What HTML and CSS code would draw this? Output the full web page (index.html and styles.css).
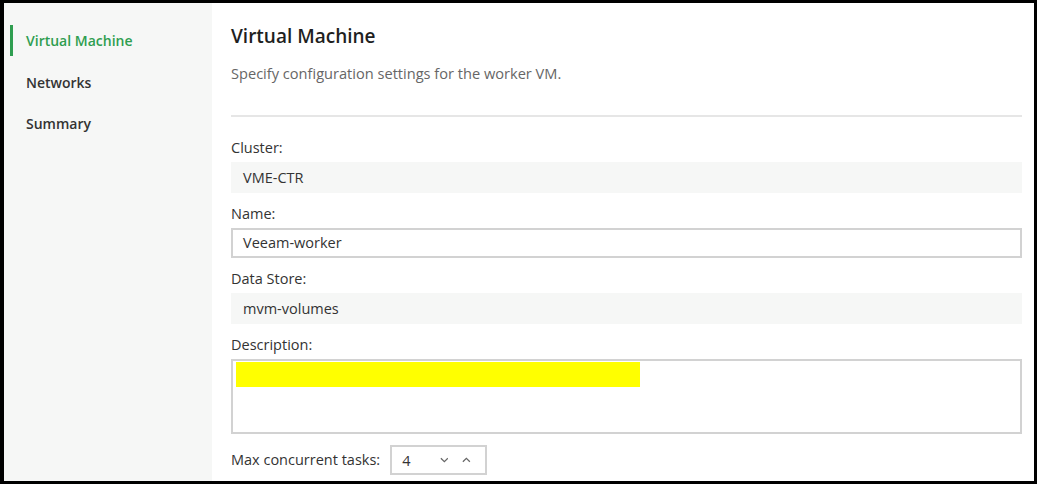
FILE: index.html
```html
<!DOCTYPE html>
<html>
<head>
<meta charset="utf-8">
<link rel="stylesheet" href="styles.css">
</head>
<body>
<div class="frame">
  <nav class="sidebar">
    <div class="step active">Virtual Machine</div>
    <div class="step">Networks</div>
    <div class="step">Summary</div>
  </nav>
  <main class="content">
    <h1 class="title">Virtual Machine</h1>
    <p class="subtitle">Specify configuration settings for the worker VM.</p>
    <div class="divider"></div>
    <div class="field first">
      <label class="label">Cluster:</label>
      <div class="readonly">VME-CTR</div>
    </div>
    <div class="field">
      <label class="label">Name:</label>
      <div class="input">Veeam-worker</div>
    </div>
    <div class="field">
      <label class="label">Data Store:</label>
      <div class="readonly">mvm-volumes</div>
    </div>
    <div class="field">
      <label class="label">Description:</label>
      <div class="textarea"><div class="highlight"></div></div>
    </div>
    <div class="tasks">
      <span class="label">Max concurrent tasks:</span>
      <div class="spinner">
        <span class="spin-value">4</span>
        <svg class="chev" width="10" height="6" viewBox="0 0 10 6"><path d="M1 1 L5 5 L9 1" fill="none" stroke="#666" stroke-width="1.4"/></svg>
        <svg class="chev" width="10" height="6" viewBox="0 0 10 6"><path d="M1 5 L5 1 L9 5" fill="none" stroke="#666" stroke-width="1.4"/></svg>
      </div>
    </div>
  </main>
</div>
</body>
</html>
```
FILE: styles.css
```css
* { box-sizing: border-box; }
html, body { margin: 0; padding: 0; background: #fff; }
body {
  font-family: "Open Sans", "Noto Sans", sans-serif;
  color: #333;
  width: 1038px;
  height: 485px;
  overflow: hidden;
}
.frame {
  width: 1037px;
  height: 484px;
  border: 3px solid #000;
  border-left-width: 4px;
  display: flex;
}
.sidebar {
  width: 208px;
  background: #f6f7f6;
  padding-top: 17px;
  flex-shrink: 0;
}
.step {
  font-size: 14px;
  font-weight: 600;
  color: #333;
  height: 41.5px;
  padding-left: 22px;
  line-height: 41px;
  position: relative;
}
.step.active { color: #2f9e50; }
.step.active::before {
  content: "";
  position: absolute;
  left: 6px;
  top: 5px;
  width: 3px;
  height: 31px;
  background: #2f9e50;
}
.content {
  flex: 1;
  padding: 20px 12px 0 19px;
}
.title {
  margin: 0;
  font-size: 19px;
  font-weight: 600;
  color: #1f1f1f;
  line-height: 26px;
}
.subtitle {
  margin: 14px 0 0 0;
  font-size: 14.6px;
  color: #666;
  line-height: 20px;
}
.divider {
  height: 2px;
  background: #e6e6e6;
  margin-top: 32px;
}
.field { display: flex; flex-direction: column; }
.label {
  font-size: 14.5px;
  color: #333;
  line-height: 20px;
}
.field .label { margin-top: 11px; margin-bottom: 4px; }
.field.first .label { margin-top: 21px; }
.readonly {
  height: 31px;
  background: #f6f7f6;
  padding-left: 12px;
  line-height: 31px;
  font-size: 14.5px;
  color: #333;
}
.input {
  height: 30px;
  border: 2px solid #d2d2d2;
  padding-left: 10px;
  line-height: 26px;
  font-size: 14.5px;
  color: #333;
}
.textarea {
  height: 75px;
  border: 2px solid #d2d2d2;
  padding: 1px 3px;
}
.highlight {
  width: 404px;
  height: 25px;
  background: #ffff00;
}
.tasks {
  display: flex;
  align-items: center;
  margin-top: 11px;
}
.spinner {
  margin-left: 10px;
  width: 97px;
  height: 30px;
  border: 2px solid #d2d2d2;
  display: flex;
  align-items: center;
  padding-left: 10px;
}
.spin-value { font-size: 14.5px; color: #333; width: 43px; }
.chev { margin-right: 14px; }
```
